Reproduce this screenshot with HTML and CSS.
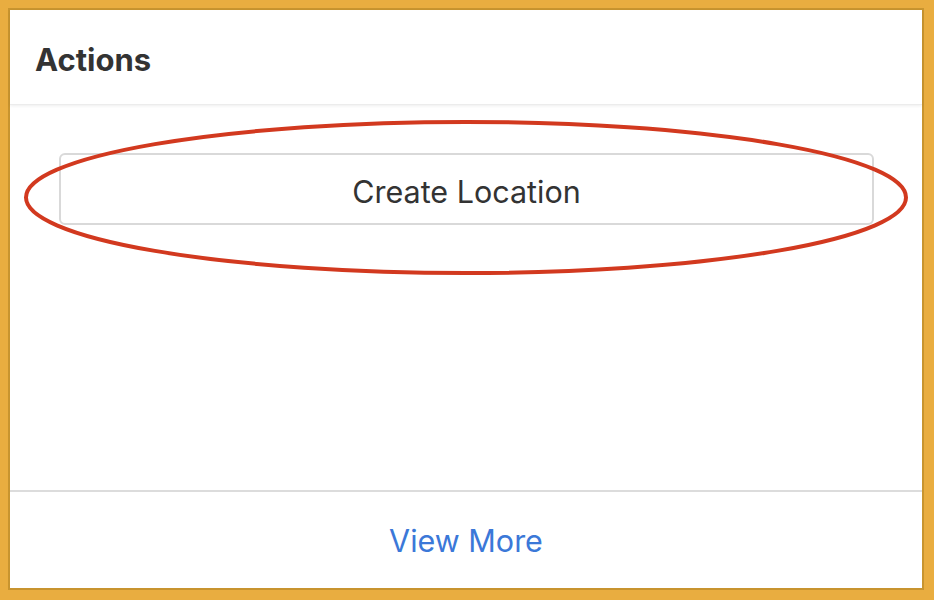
FILE: index.html
```html
<!DOCTYPE html>
<html>
<head>
<meta charset="utf-8">
<link rel="stylesheet" href="styles.css">
</head>
<body>
<div class="frame">
  <div class="card">
    <div class="card-header">Actions</div>
    <div class="card-body">
      <button class="btn">Create Location</button>
    </div>
    <div class="card-footer"><a class="link" href="#">View More</a></div>
    <svg class="annotation" width="934" height="600" viewBox="0 0 934 600">
      <ellipse cx="466" cy="197.5" rx="440" ry="75.5" fill="none" stroke="#d2391f" stroke-width="4"/>
    </svg>
  </div>
</div>
</body>
</html>
```
FILE: styles.css
```css
html, body { margin: 0; padding: 0; }
body {
  background: #e9ad40;
  width: 934px;
  height: 600px;
  font-family: Inter, "Helvetica Neue", "Liberation Sans", sans-serif;
}
.frame {
  padding: 8px 10px 10px 8px;
}
.card {
  position: relative;
  box-sizing: border-box;
  width: 916px;
  height: 582px;
  border: 2px solid #c8942f;
  background: #fff;
  display: flex;
  flex-direction: column;
}
.card-header {
  height: 95px;
  box-sizing: border-box;
  padding: 5px 0 0 25px;
  display: flex;
  align-items: center;
  font-weight: 700;
  font-size: 31px;
  color: #333;
  border-bottom: 1px solid #ececec;
  box-shadow: 0 1px 3px rgba(0,0,0,0.07);
}
.card-body {
  flex: 1;
  padding: 48px 48px 0 49px;
}
.btn {
  display: block;
  width: 100%;
  height: 72px;
  box-sizing: border-box;
  border: 2px solid #d9d9d9;
  border-radius: 6px;
  background: #fff;
  font-family: inherit;
  font-size: 30.5px;
  color: #333;
  padding: 4px 0 0;
}
.card-footer {
  height: 98px;
  box-sizing: border-box;
  border-top: 2px solid #dcdcdc;
  display: flex;
  align-items: center;
  justify-content: center;
}
.link {
  color: #3b78d8;
  text-decoration: none;
  font-size: 30.5px;
}
.annotation {
  position: absolute;
  left: -10px;
  top: -10px;
  pointer-events: none;
}
```
